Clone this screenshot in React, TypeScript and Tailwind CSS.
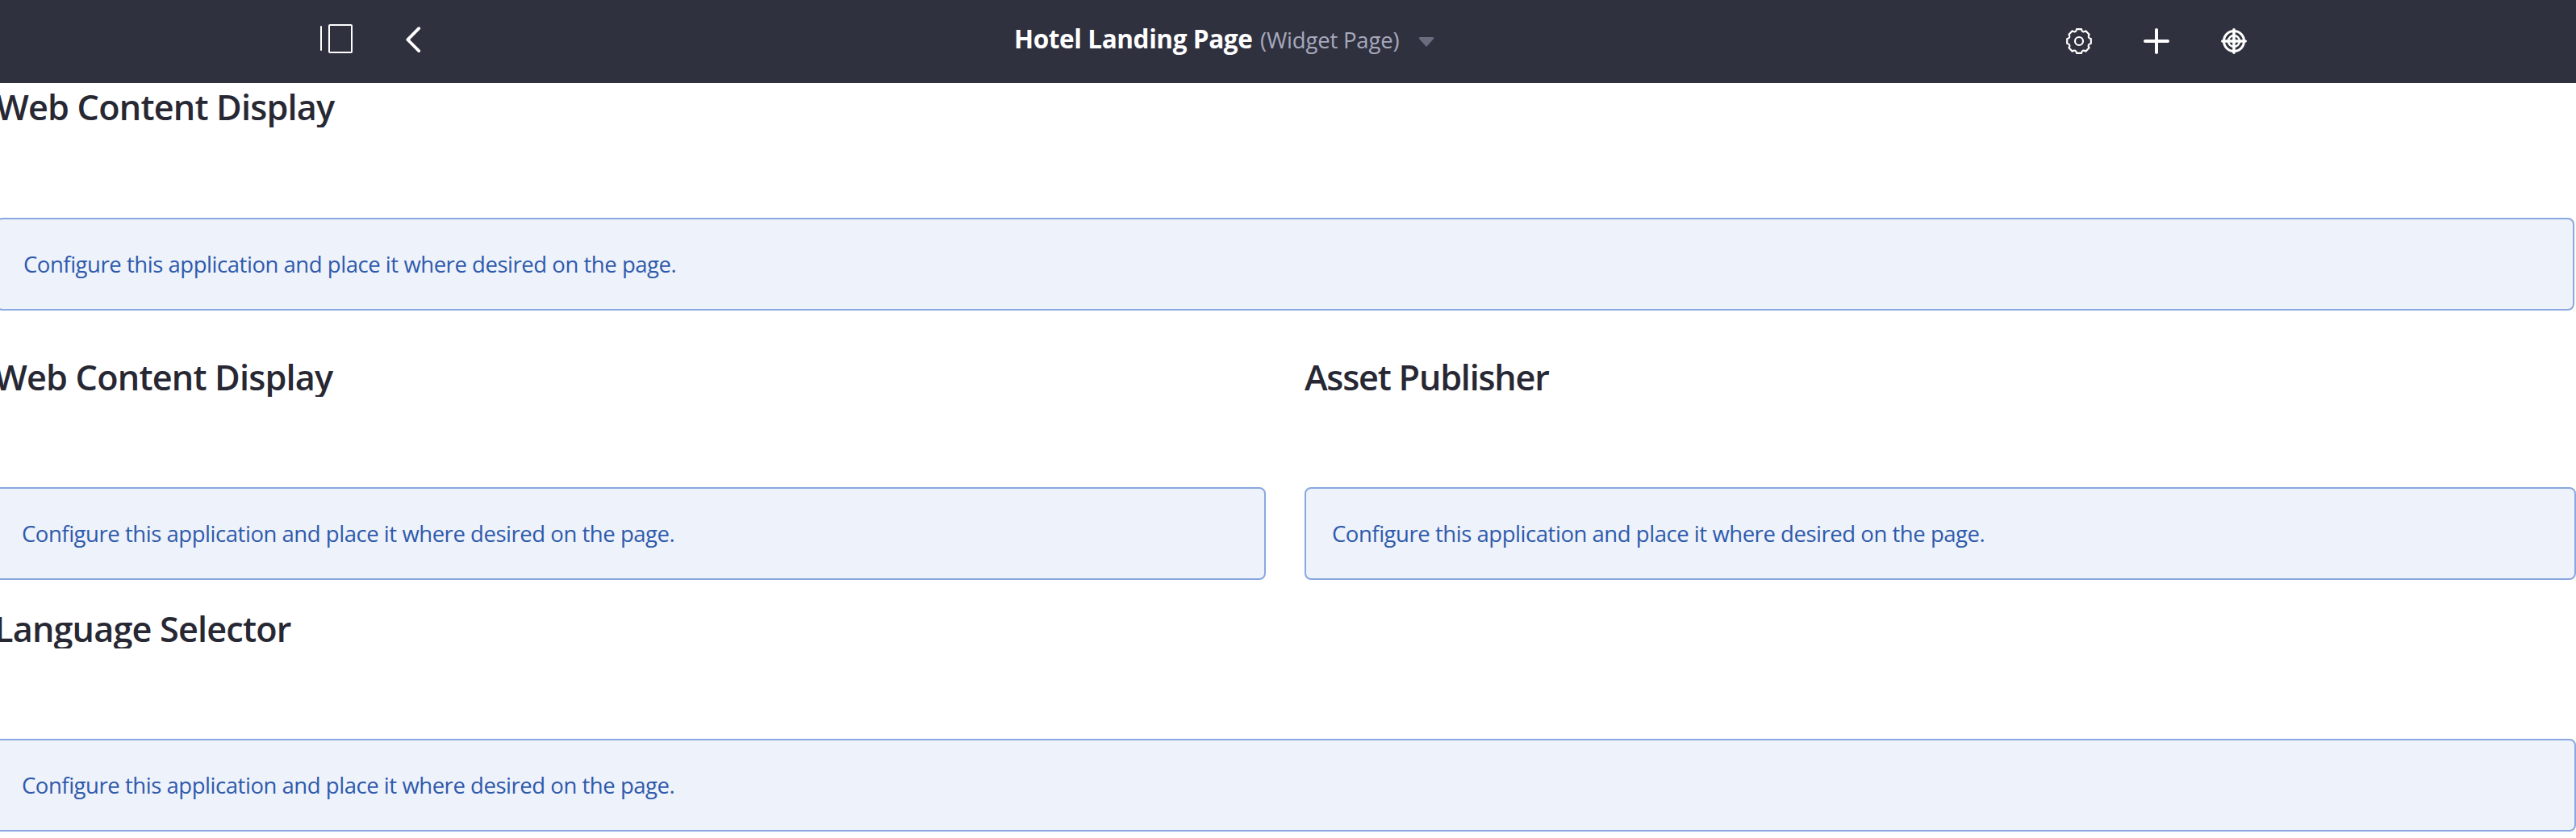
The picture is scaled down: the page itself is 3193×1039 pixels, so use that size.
const MESSAGE = 'Configure this application and place it where desired on the page.';

function Alert() {
  return (
    <div className="flex h-[115px] items-center rounded-lg border-2 border-[#89a7e0] bg-[#eef2fa] pt-px pl-8 text-[27.5px] tracking-[-0.46px] text-[#2e5aac]">
      {MESSAGE}
    </div>
  );
}

function Portlet({ title, titleClass }: { title: string; titleClass: string }) {
  return (
    <section>
      <h2 className={`mb-28 overflow-hidden text-[43.2px] leading-[51px] font-semibold whitespace-nowrap text-[#272833] ${titleClass}`}>
        {title}
      </h2>
      <Alert />
    </section>
  );
}

function SidebarIcon() {
  return (
    <svg className="block h-[38px] w-11" viewBox="0 0 44 38" fill="none" stroke="white" strokeWidth="2">
      <path d="M3 3v29" strokeLinecap="round" />
      <rect x="13" y="1" width="28" height="34" rx="1" />
    </svg>
  );
}

function ChevronIcon() {
  return (
    <svg className="block h-8 w-5" viewBox="0 0 20 32" fill="none" stroke="white" strokeWidth="3.8" strokeLinecap="round" strokeLinejoin="round">
      <path d="M16.2 2.2 2.4 16.2l13.8 14" />
    </svg>
  );
}

function GearIcon() {
  return (
    <svg className="block size-8" viewBox="-16 -16 32 32" fill="none" stroke="white" strokeWidth="2.2" strokeLinejoin="round">
      <circle r="5" />
      <path d="M-3-14.8H3C3.4-11.5 5.6-10.8 8.3-12.6L12.6-8.3C10.8-5.6 11.5-3.4 14.8-3V3C11.5 3.4 10.8 5.6 12.6 8.3L8.3 12.6C5.6 10.8 3.4 11.5 3 14.8H-3C-3.4 11.5-5.6 10.8-8.3 12.6L-12.6 8.3C-10.8 5.6-11.5 3.4-14.8 3V-3C-11.5-3.4-10.8-5.6-12.6-8.3L-8.3-12.6C-5.6-10.8-3.4-11.5-3-14.8Z" />
    </svg>
  );
}

function PlusIcon() {
  return (
    <svg className="block size-8" viewBox="0 0 32 32" stroke="white" strokeWidth="4" strokeLinecap="round">
      <path d="M16 2v28M2 16h28" />
    </svg>
  );
}

function TargetIcon() {
  return (
    <svg className="block size-8" viewBox="-16 -16 32 32" fill="none" stroke="white">
      <circle r="12.5" strokeWidth="3" />
      <circle r="7" strokeWidth="2.6" />
      <path d="M0-14.2V14.2M-14.2 0H14.2" strokeWidth="3.6" strokeLinecap="round" />
    </svg>
  );
}

export default function App() {
  return (
    <div className="h-[1039px] overflow-hidden bg-white font-['Open_Sans',sans-serif]">
      <header className="flex h-[103px] bg-[#30313f]">
        <div className="flex w-[1257px] shrink-0 items-start pl-[395px]">
          <div className="mt-[30px]"><SidebarIcon /></div>
          <div className="mt-[33px] ml-16"><ChevronIcon /></div>
        </div>
        <div className="flex w-[1304px] shrink-0 items-baseline leading-[96px] whitespace-nowrap">
          <h1 className="w-[305px] text-[31.5px] font-bold tracking-[-0.4px] text-white">Hotel Landing Page</h1>
          <span className="w-[196px] text-[27.5px] tracking-[-0.2px] text-[#a7a9bc]">(Widget Page)</span>
          <svg className="h-[14px] w-5" viewBox="0 0 20 14" fill="#6b6c7e">
            <path d="M2 0h16q2 .3 1 2l-8 9q-1 1-2 0L1 2Q0 .3 2 0Z" />
          </svg>
        </div>
        <div className="flex items-start gap-16 pt-[35px]">
          <GearIcon />
          <PlusIcon />
          <TargetIcon />
        </div>
      </header>
      <main className="pt-1">
        <div className="mr-0.5 -ml-[5px]">
          <Portlet title="Web Content Display" titleClass="h-[51px] tracking-[-0.8px]" />
        </div>
        <div className="mt-[57px] -ml-[7px] grid grid-cols-[1576px_1576px] gap-12">
          <Portlet title="Web Content Display" titleClass="h-[50px] tracking-[-0.8px]" />
          <Portlet title="Asset Publisher" titleClass="h-[50px] tracking-[-1.2px]" />
        </div>
        <div className="mt-[35px] -ml-[7px]">
          <Portlet title="Language Selector" titleClass="h-[50px] tracking-[-0.82px]" />
        </div>
      </main>
    </div>
  );
}
